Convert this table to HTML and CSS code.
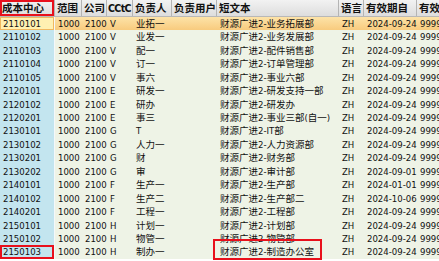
FILE: index.html
```html
<!DOCTYPE html>
<html lang="zh">
<head>
<meta charset="utf-8">
<link rel="stylesheet" href="styles.css">
</head>
<body>
<div class="grid">
  <div class="row head">
    <div class="c key marked">成本中心</div><div class="c">范围</div><div class="c">公司</div><div class="c tight">CCtC</div><div class="c">负责人</div><div class="c">负责用户</div><div class="c">短文本</div><div class="c">语言</div><div class="c">有效期自</div><div class="c">有效</div>
  </div>
  <div class="row sel">
    <div class="c key">2110101</div><div class="c">1000</div><div class="c">2100</div><div class="c">V</div><div class="c">业拓一</div><div class="c"></div><div class="c">财源广进2-业务拓展部</div><div class="c">ZH</div><div class="c">2024-09-24</div><div class="c">9999</div>
  </div>
  <div class="row">
    <div class="c key">2110102</div><div class="c">1000</div><div class="c">2100</div><div class="c">V</div><div class="c">业发一</div><div class="c"></div><div class="c">财源广进2-业务发展部</div><div class="c">ZH</div><div class="c">2024-09-24</div><div class="c">9999</div>
  </div>
  <div class="row">
    <div class="c key">2110103</div><div class="c">1000</div><div class="c">2100</div><div class="c">V</div><div class="c">配一</div><div class="c"></div><div class="c">财源广进2-配件销售部</div><div class="c">ZH</div><div class="c">2024-09-24</div><div class="c">9999</div>
  </div>
  <div class="row">
    <div class="c key">2110104</div><div class="c">1000</div><div class="c">2100</div><div class="c">V</div><div class="c">订一</div><div class="c"></div><div class="c">财源广进2-订单管理部</div><div class="c">ZH</div><div class="c">2024-09-24</div><div class="c">9999</div>
  </div>
  <div class="row">
    <div class="c key">2110105</div><div class="c">1000</div><div class="c">2100</div><div class="c">V</div><div class="c">事六</div><div class="c"></div><div class="c">财源广进2-事业六部</div><div class="c">ZH</div><div class="c">2024-09-24</div><div class="c">9999</div>
  </div>
  <div class="row">
    <div class="c key">2120101</div><div class="c">1000</div><div class="c">2100</div><div class="c">E</div><div class="c">研发一</div><div class="c"></div><div class="c">财源广进2-研发支持一部</div><div class="c">ZH</div><div class="c">2024-09-24</div><div class="c">9999</div>
  </div>
  <div class="row">
    <div class="c key">2120102</div><div class="c">1000</div><div class="c">2100</div><div class="c">E</div><div class="c">研办</div><div class="c"></div><div class="c">财源广进2-研发办</div><div class="c">ZH</div><div class="c">2024-09-24</div><div class="c">9999</div>
  </div>
  <div class="row">
    <div class="c key">2120201</div><div class="c">1000</div><div class="c">2100</div><div class="c">E</div><div class="c">事三</div><div class="c"></div><div class="c">财源广进2-事业三部(自一)</div><div class="c">ZH</div><div class="c">2024-09-24</div><div class="c">9999</div>
  </div>
  <div class="row">
    <div class="c key">2130101</div><div class="c">1000</div><div class="c">2100</div><div class="c">G</div><div class="c">T</div><div class="c"></div><div class="c">财源广进2-IT部</div><div class="c">ZH</div><div class="c">2024-09-24</div><div class="c">9999</div>
  </div>
  <div class="row">
    <div class="c key">2130102</div><div class="c">1000</div><div class="c">2100</div><div class="c">G</div><div class="c">人力一</div><div class="c"></div><div class="c">财源广进2-人力资源部</div><div class="c">ZH</div><div class="c">2024-09-24</div><div class="c">9999</div>
  </div>
  <div class="row">
    <div class="c key">2130201</div><div class="c">1000</div><div class="c">2100</div><div class="c">G</div><div class="c">财</div><div class="c"></div><div class="c">财源广进2-财务部</div><div class="c">ZH</div><div class="c">2024-09-24</div><div class="c">9999</div>
  </div>
  <div class="row">
    <div class="c key">2130202</div><div class="c">1000</div><div class="c">2100</div><div class="c">G</div><div class="c">审</div><div class="c"></div><div class="c">财源广进2-审计部</div><div class="c">ZH</div><div class="c">2024-09-01</div><div class="c">9999</div>
  </div>
  <div class="row">
    <div class="c key">2140101</div><div class="c">1000</div><div class="c">2100</div><div class="c">F</div><div class="c">生产一</div><div class="c"></div><div class="c">财源广进2-生产部</div><div class="c">ZH</div><div class="c">2024-01-01</div><div class="c">9999</div>
  </div>
  <div class="row">
    <div class="c key">2140102</div><div class="c">1000</div><div class="c">2100</div><div class="c">F</div><div class="c">生产二</div><div class="c"></div><div class="c">财源广进2-生产部二</div><div class="c">ZH</div><div class="c">2024-10-06</div><div class="c">9999</div>
  </div>
  <div class="row">
    <div class="c key">2140201</div><div class="c">1000</div><div class="c">2100</div><div class="c">F</div><div class="c">工程一</div><div class="c"></div><div class="c">财源广进2-工程部</div><div class="c">ZH</div><div class="c">2024-09-24</div><div class="c">9999</div>
  </div>
  <div class="row">
    <div class="c key">2150101</div><div class="c">1000</div><div class="c">2100</div><div class="c">H</div><div class="c">计划一</div><div class="c"></div><div class="c">财源广进2-计划部</div><div class="c">ZH</div><div class="c">2024-09-24</div><div class="c">9999</div>
  </div>
  <div class="row">
    <div class="c key">2150102</div><div class="c">1000</div><div class="c">2100</div><div class="c">H</div><div class="c">物管一</div><div class="c"></div><div class="c">财源广进2-物管部</div><div class="c">ZH</div><div class="c">2024-09-24</div><div class="c">9999</div>
  </div>
  <div class="row last">
    <div class="c key marked">2150103</div><div class="c">1000</div><div class="c">2100</div><div class="c">H</div><div class="c">制办一</div><div class="c"></div><div class="c boxed"><span class="box"></span>财源广进2-制造办公室</div><div class="c">ZH</div><div class="c">2024-09-24</div><div class="c">9999</div>
  </div>
</div>
</body>
</html>
```

FILE: styles.css
```css
html, body {
  margin: 0;
  padding: 0;
  overflow: hidden;
  background: #ffffff;
}
.grid {
  width: 439px;
  height: 261px;
  overflow: hidden;
  font-family: "DejaVu Sans Condensed", "DejaVu Sans", "Noto Sans CJK SC", sans-serif;
  font-size: 9.5px;
  color: #111111;
  background: #ffffff;
}
.row {
  display: grid;
  grid-template-columns: 55px 27px 25px 26px 39px 45px 122px 25px 53px 60px;
  height: 13.45px;
  background: #eef3e6;
}
.c {
  position: relative;
  padding-left: 3px;
  white-space: nowrap;
  display: flex;
  align-items: center;
  line-height: 1;
}
.key {
  background: #c3e5ef;
  border-right: 1px solid #f4f8fa;
}
.head {
  height: 17px;
  background: linear-gradient(#f2f2f2, #dddddd);
  border-bottom: 1px solid #b8b8b8;
  box-sizing: border-box;
  font-weight: bold;
  font-size: 10.5px;
  color: #111;
}
.head .c {
  border-right: 1px solid #b4b4b4;
  background: transparent;
  padding-left: 2px;
  overflow: hidden;
}
.head .tight {
  padding-left: 1px;
  letter-spacing: -0.6px;
}
.sel {
  background: linear-gradient(#fde3a8, #f8cb7e);
}
.sel .key {
  background: #fff0b2;
  box-shadow: inset 0 0 0 1px #f0b860;
}
.marked {
  box-shadow: inset 0 0 0 2px #e8101c;
}
.head .marked {
  box-shadow: inset 0 0 0 2px #e8101c;
}
.box {
  position: absolute;
  left: -4px;
  top: -6px;
  width: 109px;
  height: 21px;
  border: 2px solid #e8101c;
  box-sizing: border-box;
}
```
